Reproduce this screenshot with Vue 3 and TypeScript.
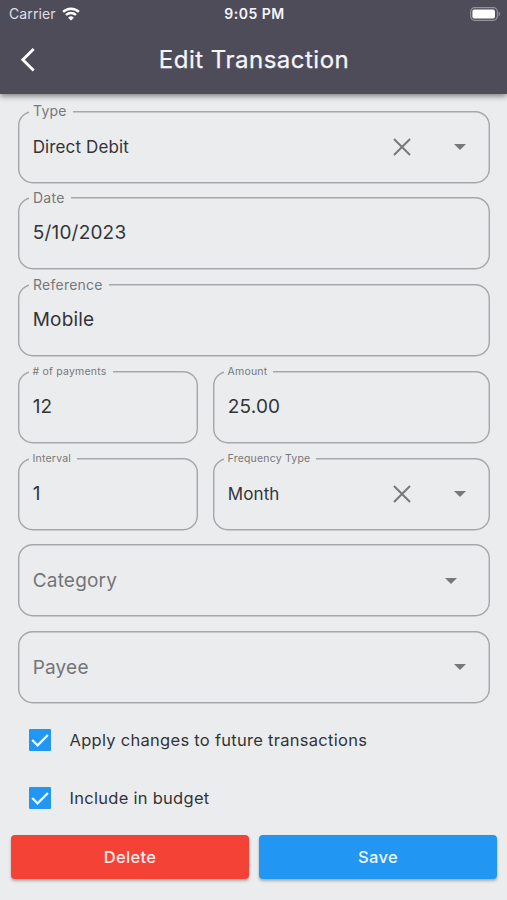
<script setup lang="ts">
import { ref } from 'vue'

interface Field {
  id: string
  label: string
  value?: string
  smallLabel?: boolean
  select?: boolean
  clearable?: boolean
  inset?: boolean
}

const rows: Field[][] = [
  [{ id: 'type', label: 'Type', value: 'Direct Debit', select: true, clearable: true }],
  [{ id: 'date', label: 'Date', value: '5/10/2023' }],
  [{ id: 'reference', label: 'Reference', value: 'Mobile' }],
  [
    { id: 'payments', label: '# of payments', value: '12', smallLabel: true },
    { id: 'amount', label: 'Amount', value: '25.00', smallLabel: true },
  ],
  [
    { id: 'interval', label: 'Interval', value: '1', smallLabel: true },
    { id: 'frequency', label: 'Frequency Type', value: 'Month', smallLabel: true, select: true, clearable: true },
  ],
  [{ id: 'category', label: 'Category', select: true, inset: true }],
  [{ id: 'payee', label: 'Payee', select: true }],
]

const options = ref([
  { id: 'future', label: 'Apply changes to future transactions', checked: true },
  { id: 'budget', label: 'Include in budget', checked: true },
])
</script>

<template>
  <div class="screen">
    <header class="header">
      <div class="status">
        <div class="carrier">
          <span>Carrier</span>
          <svg class="wifi" viewBox="0 0 18 14" width="18" height="14">
            <path d="M1.1 4.9 A11.4 11.4 0 0 1 16.9 4.9" />
            <path d="M4 8 A7.2 7.2 0 0 1 14 8" />
            <path class="dot" d="M9 13.6 L6.1 10.7 A4.2 4.2 0 0 1 11.9 10.7 Z" />
          </svg>
        </div>
        <span class="clock">9:05 PM</span>
        <svg class="battery" viewBox="0 0 31 14" width="31" height="14">
          <rect class="shell" x="0.7" y="0.7" width="26.6" height="12.6" rx="4" />
          <rect class="charge" x="2.4" y="2.4" width="22.6" height="9.2" rx="2" />
          <path class="cap" d="M28.6 4.4 Q31.6 7 28.6 9.6 Z" />
        </svg>
      </div>
      <div class="toolbar">
        <svg class="back" viewBox="0 0 16 26" width="16" height="26">
          <path d="M13.7 2 L2.8 12.8 L13.7 23.6" />
        </svg>
        <h1>Edit Transaction</h1>
      </div>
    </header>

    <main class="form">
      <div v-for="(row, i) in rows" :key="i" class="row" :class="{ split: row.length > 1 }">
        <div v-for="f in row" :key="f.id" class="field">
          <svg class="frame"><rect class="outline" /></svg>
          <span v-if="f.value" class="label" :class="{ small: f.smallLabel }">{{ f.label }}</span>
          <div class="content" :class="{ inset: f.inset }">
            <span class="value" :class="{ chosen: f.value && f.select, empty: !f.value }">{{ f.value ?? f.label }}</span>
            <svg v-if="f.clearable" class="clear" viewBox="0 0 18 18" width="18" height="18">
              <path d="M1 1 L17 17 M17 1 L1 17" />
            </svg>
            <svg v-if="f.select" class="arrow" viewBox="0 0 12 6" width="12" height="6">
              <path d="M0 0 H12 L6 6 Z" />
            </svg>
          </div>
        </div>
      </div>

      <div class="options">
        <label v-for="o in options" :key="o.id" class="option" @click="o.checked = !o.checked">
          <svg viewBox="0 0 22 22" width="22" height="22">
            <rect class="box" width="22" height="22" rx="1" />
            <path v-if="o.checked" class="tick" d="M3.2 11 L8.6 16.3 L18.9 6" />
          </svg>
          <span>{{ o.label }}</span>
        </label>
      </div>
    </main>

    <footer class="actions">
      <button type="button" class="delete">Delete</button>
      <button type="button" class="save">Save</button>
    </footer>
  </div>
</template>

<style>
body {
  background: #ebecee;
}
</style>

<style scoped>
.screen {
  box-sizing: border-box;
  width: 100%;
  height: 900px;
  display: flex;
  flex-direction: column;
  background: #ebecee;
  color: #333437;
  font-family: Inter, Roboto, sans-serif;
  overflow: hidden;
}

.header {
  height: 94px;
  flex: none;
  background: #4f4c5a;
  color: #f6f5fc;
  box-shadow: 0 2px 6px rgba(0, 0, 0, 0.48);
}

.status {
  display: grid;
  grid-template-columns: 1fr auto 1fr;
  align-items: center;
  height: 27px;
  padding: 0 6px 0 8px;
  font-size: 14px;
}

.carrier {
  display: flex;
  align-items: center;
  gap: 6px;
  padding-left: 1px;
  color: #dfdee6;
  letter-spacing: 0.1px;
}

.wifi path {
  fill: none;
  stroke: #fff;
  stroke-width: 2.4;
}

.wifi .dot {
  fill: #fff;
  stroke: none;
}

.clock {
  font-size: 14px;
  font-weight: 600;
  letter-spacing: 0.5px;
}

.battery {
  justify-self: end;
}

.shell {
  fill: none;
  stroke: #94929b;
  stroke-width: 1.2;
}

.charge {
  fill: #fff;
}

.cap {
  fill: #94929b;
}

.toolbar {
  display: grid;
  grid-template-columns: 40px 1fr 40px;
  align-items: center;
  height: 66px;
}

.back {
  margin-left: 20px;
}

.back path {
  fill: none;
  stroke: #fff;
  stroke-width: 2.8;
}

h1 {
  margin: 0;
  padding-left: 1px;
  text-align: center;
  font-size: 24px;
  font-weight: 400;
  line-height: 30px;
  letter-spacing: 0.5px;
  -webkit-text-stroke: 0.25px currentColor;
}

.form {
  padding: 16.5px 17px 0 18px;
}

.row {
  display: grid;
  grid-template-columns: 1fr;
  grid-template-rows: 72.4px;
  gap: 15px;
  height: 72.4px;
  margin-bottom: 14.4px;
}

.row.split {
  grid-template-columns: 180px 1fr;
}

.field {
  display: grid;
  grid-template: 72.4px / 100%;
}

.field > * {
  grid-area: 1 / 1;
}

.frame {
  width: 100%;
  height: 72.4px;
  overflow: visible;
}

.outline {
  x: 0.7px;
  y: 0.7px;
  width: calc(100% - 1.4px);
  height: 71px;
  rx: 14px;
  fill: none;
  stroke: #a6a7aa;
  stroke-width: 1.4;
}

.label {
  justify-self: start;
  align-self: start;
  margin: -7.5px 0 0 11px;
  padding: 0 6px 0 4px;
  background: #ebecee;
  color: #77787b;
  font-size: 14px;
  line-height: 16px;
  letter-spacing: 0.25px;
  white-space: nowrap;
}

.label.small {
  margin: -7px 0 0 10.6px;
  font-size: 10.5px;
  letter-spacing: 0.2px;
}

.content {
  display: flex;
  align-items: center;
  padding: 0 24px 0 14.7px;
}

.content.inset {
  padding-right: 33.5px;
}

.value {
  flex: 1;
  font-size: 19px;
  line-height: 24px;
  padding-bottom: 0.4px;
  letter-spacing: 0.2px;
}

.value.chosen {
  padding-bottom: 0;
  font-size: 17px;
  letter-spacing: 0.12px;
}

.value.empty {
  padding: 0.8px 0 0;
  color: #747578;
}

.clear {
  margin-right: 43px;
}

.clear path {
  fill: none;
  stroke: #77787a;
  stroke-width: 2;
}

.arrow path {
  fill: #77787a;
}

.options {
  display: flex;
  flex-direction: column;
  gap: 36.5px;
  padding: 11px 0 0 11px;
}

.option {
  display: flex;
  align-items: center;
  gap: 18.5px;
  height: 22px;
  font-size: 16.5px;
  letter-spacing: 0.28px;
}

.box {
  fill: #2196f3;
}

.tick {
  fill: none;
  stroke: #f4faff;
  stroke-width: 2.3;
}

.actions {
  display: grid;
  grid-template-columns: 1fr 1fr;
  gap: 10px;
  margin-top: auto;
  padding: 0 10px 20.6px 11px;
}

button {
  height: 44px;
  padding: 0;
  border: 0;
  border-radius: 4px;
  color: #eef6ff;
  font: 500 16.5px Inter, Roboto, sans-serif;
  letter-spacing: 0.3px;
  box-shadow: 0 2px 3px rgba(0, 0, 0, 0.28);
}

.delete {
  background: #f44336;
  color: #ffeceb;
}

.save {
  background: #2196f3;
}
</style>
